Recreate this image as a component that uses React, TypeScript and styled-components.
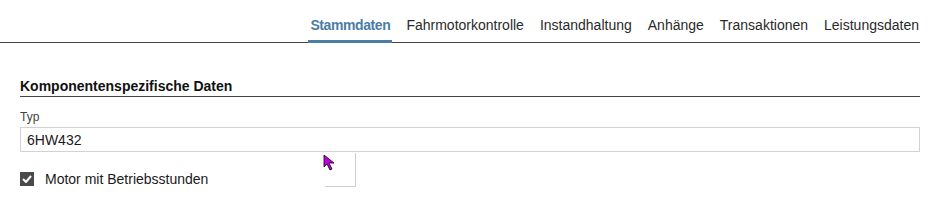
import React from "react";
import styled, { createGlobalStyle } from "styled-components";

const Global = createGlobalStyle`
  html, body { margin: 0; padding: 0; background: #fff; }
  body { font-family: "Liberation Sans", Arial, sans-serif; color: #222; }
`;

const Page = styled.div`
  width: 931px;
  height: 207px;
  position: relative;
  overflow: hidden;
`;

const TabBar = styled.nav`
  display: flex;
  justify-content: flex-end;
  gap: 12px;
  margin-right: 11px;
  height: 42px;
  border-bottom: 1px solid #444;
  box-sizing: content-box;
`;

const Tab = styled.div<{ $active?: boolean }>`
  height: 43px;
  box-sizing: border-box;
  padding: 17px 2px 7px;
  line-height: 16px;
  font-size: 14px;
  font-weight: ${(p) => (p.$active ? 700 : 400)};
  letter-spacing: ${(p) => (p.$active ? "-0.4px" : "0")};
  color: ${(p) => (p.$active ? "#4a7ca6" : "#2a2a2a")};
  border-bottom: 3px solid ${(p) => (p.$active ? "#4a7ca6" : "transparent")};
  white-space: nowrap;
  &:last-child {
    margin-right: -1px;
  }
`;

const Section = styled.section`
  padding: 34px 11px 0 20px;
  display: flex;
  flex-direction: column;
`;

const Heading = styled.h2`
  margin: 0;
  font-size: 14px;
  font-weight: 700;
  color: #111;
  line-height: 17px;
  padding-top: 1px;
  padding-bottom: 1px;
  border-bottom: 1px solid #444;
`;

const FieldLabel = styled.label`
  margin-top: 14px;
  font-size: 12px;
  line-height: 13px;
  color: #444;
`;

const Input = styled.div`
  margin-top: 3px;
  height: 25px;
  box-sizing: border-box;
  border: 1px solid #d2d2d2;
  padding: 0 6px;
  display: flex;
  align-items: center;
  font-size: 14px;
  color: #1a1a1a;
`;

const CheckRow = styled.div`
  margin-top: 19px;
  display: flex;
  align-items: center;
  gap: 11px;
  font-size: 14px;
  color: #1a1a1a;
`;

const Box = styled.span`
  width: 14px;
  height: 14px;
  background: #4a4a4a;
  display: inline-flex;
  align-items: center;
  justify-content: center;
`;

const Ghost = styled.div`
  position: absolute;
  left: 325px;
  top: 153px;
  width: 30px;
  height: 33px;
  border-right: 1px solid #cfcfcf;
  border-bottom: 1px solid #cfcfcf;
`;

const Cursor = styled.svg`
  position: absolute;
  left: 323px;
  top: 154px;
`;

const tabs = [
  "Stammdaten",
  "Fahrmotorkontrolle",
  "Instandhaltung",
  "Anhänge",
  "Transaktionen",
  "Leistungsdaten",
];

export default function App() {
  return (
    <Page>
      <Global />
      <TabBar>
        {tabs.map((t, i) => (
          <Tab key={t} $active={i === 0}>
            {t}
          </Tab>
        ))}
      </TabBar>
      <Section>
        <Heading>Komponentenspezifische Daten</Heading>
        <FieldLabel>Typ</FieldLabel>
        <Input>6HW432</Input>
        <CheckRow>
          <Box>
            <svg width="10" height="8" viewBox="0 0 10 8">
              <path d="M1 4 L4 7 L9 1" stroke="#fff" strokeWidth="2" fill="none" />
            </svg>
          </Box>
          Motor mit Betriebsstunden
        </CheckRow>
      </Section>
      <Ghost />
      <Cursor width="12" height="17" viewBox="0 0 12 17">
        <path d="M1 1 L1 13 L4 10 L7 16 L9 15 L6 9 L11 9 Z" fill="#c000e0" stroke="#000" strokeWidth="0.8" />
      </Cursor>
    </Page>
  );
}
